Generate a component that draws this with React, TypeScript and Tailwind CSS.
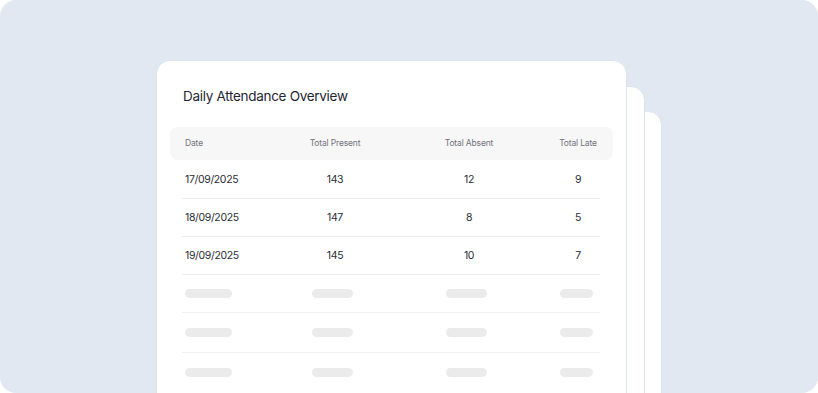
import React from "react";

const rows = [
  { date: "17/09/2025", present: "143", absent: "12", late: "9" },
  { date: "18/09/2025", present: "147", absent: "8", late: "5" },
  { date: "19/09/2025", present: "145", absent: "10", late: "7" },
];

const grid = "grid grid-cols-[106px_88px_180px_38px] items-center";

export default function App() {
  return (
    <div className="w-[818px] h-[393px] bg-white" style={{ fontFamily: "Inter, 'Noto Sans', sans-serif" }}>
      <div className="w-[818px] h-[393px] rounded-[16px] bg-[#e1e8f2] overflow-hidden pl-[156px] pt-[60px]">
        <div className="relative w-[471px] h-[400px]">
          <div className="absolute top-[51px] right-[-35px] w-[470px] h-[400px] rounded-[14px] bg-white border border-[#dce5f0]" />
          <div className="absolute top-[26px] right-[-18px] w-[470px] h-[400px] rounded-[14px] bg-white border border-[#dce5f0]" />
          <div className="relative w-[471px] h-[400px] rounded-[14px] bg-white border border-[#dce5f0] px-[13px]">
            <div className="pt-[25px] pl-[13px] text-[13.5px] leading-[20px] text-[#1f2632] tracking-[-0.3px]">
              Daily Attendance Overview
            </div>
            <div className={`${grid} mt-[21px] h-[33px] rounded-[8px] bg-[#f7f7f8] px-[15px] text-[8.5px] tracking-[-0.15px] text-[#73737c] whitespace-nowrap`}>
              <div>Date</div>
              <div className="text-center">Total Present</div>
              <div className="text-center">Total Absent</div>
              <div className="text-center">Total Late</div>
            </div>
            <div className="mx-[12px] mr-[13px]">
              {rows.map((r, i) => (
                <div key={r.date} className={`${grid} ${i === 0 ? "h-[39px] pt-[1px]" : "h-[38px] pt-[1px]"} px-[3px] border-b border-[#ececee] text-[10.5px] tracking-[-0.35px] text-[#2a2d34]`}>
                  <div>{r.date}</div>
                  <div className="text-center">{r.present}</div>
                  <div className="text-center">{r.absent}</div>
                  <div className="text-center">{r.late}</div>
                </div>
              ))}
              {[0, 1, 2].map((i) => (
                <div key={i} className={`${grid} ${i === 0 ? "h-[38px]" : i === 1 ? "h-[40px]" : "h-[40px] border-transparent"} px-[3px] border-b border-[#f0f0f2]`}>
                  <div><div className="h-[9px] w-[47px] rounded-full bg-[#ebebec]" /></div>
                  <div><div className="ml-[21px] h-[9px] w-[41px] rounded-full bg-[#ebebec]" /></div>
                  <div><div className="ml-[67px] h-[9px] w-[41px] rounded-full bg-[#ebebec]" /></div>
                  <div><div className="ml-[1px] h-[9px] w-[33px] rounded-full bg-[#ebebec]" /></div>
                </div>
              ))}
            </div>
          </div>
        </div>
      </div>
    </div>
  );
}
